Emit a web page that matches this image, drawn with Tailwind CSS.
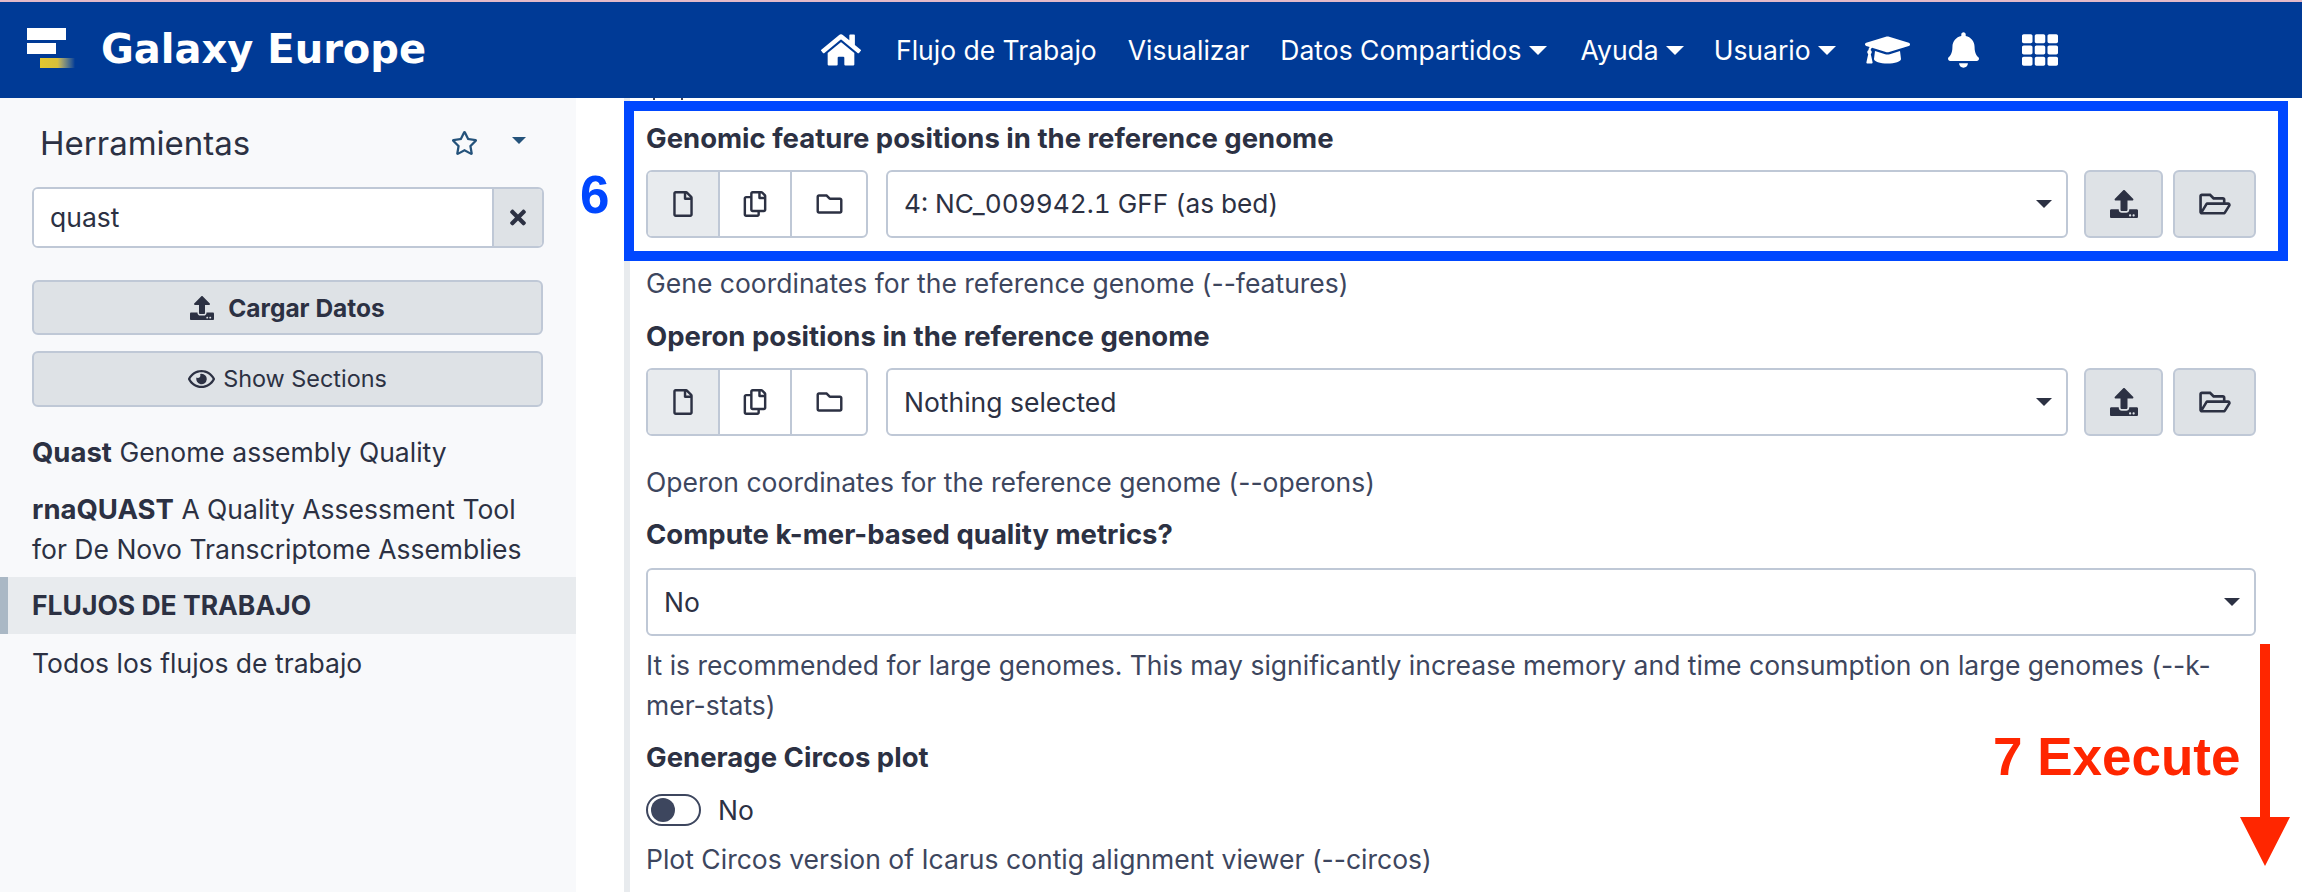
<!DOCTYPE html>
<html lang="en">
  <head>
    <meta charset="UTF-8" />
    <title>Galaxy Europe</title>
    <script src="https://cdn.jsdelivr.net/npm/@tailwindcss/browser@4"></script>
  </head>
  <body class="w-[2302px] h-[892px] overflow-hidden bg-white font-['Inter',sans-serif] text-[26.5px] leading-[40px] text-[#2c3143]">
    <!-- masthead -->
    <header class="flex items-center h-[98px] border-t-2 border-[#e3b9c9] bg-[#003a96] text-white">
      <div class="w-[27px]"></div>
      <div class="flex flex-col w-[48px] h-[42px] gap-[3px] mt-[-2px]">
        <div class="w-[39px] h-[12px] bg-white"></div>
        <div class="w-[29px] h-[11px] bg-white"></div>
        <div class="w-[35px] h-[10px] ml-[13px] mt-[1px] bg-gradient-to-r from-[#e3c72e] via-[#d8bf3a] to-[#003a96]"></div>
      </div>
      <div class="ml-[26px] w-[720px] font-['DejaVu_Sans',sans-serif] font-bold text-[40px] leading-none mt-[-2px]">Galaxy Europe</div>
      <nav class="flex items-center">
        <svg class="w-[40px] h-[36px] fill-white" viewBox="0 0 576 512"><path d="M280.37 148.26L96 300.11V464a16 16 0 0 0 16 16l112.06-.29a16 16 0 0 0 15.92-16V368a16 16 0 0 1 16-16h64a16 16 0 0 1 16 16v95.64a16 16 0 0 0 16 16.05L464 480a16 16 0 0 0 16-16V300L295.67 148.26a12.19 12.19 0 0 0-15.3 0zM571.6 251.47L488 182.56V44.05a12 12 0 0 0-12-12h-56a12 12 0 0 0-12 12v72.61L318.47 43a48 48 0 0 0-61 0L4.34 251.47a12 12 0 0 0-1.6 16.9l25.5 31A12 12 0 0 0 45.15 301l235.22-193.74a12.19 12.19 0 0 1 15.3 0L530.9 301a12 12 0 0 0 16.9-1.6l25.5-31a12 12 0 0 0-1.7-16.93z"/></svg>
        <a class="ml-[35px]">Flujo de Trabajo</a>
        <a class="ml-[31px]">Visualizar</a>
        <a class="ml-[31px] flex items-center">Datos Compartidos<span class="ml-[7px] border-x-[9px] border-t-[9px] border-x-transparent border-t-white"></span></a>
        <a class="ml-[34px] flex items-center">Ayuda<span class="ml-[7px] border-x-[9px] border-t-[9px] border-x-transparent border-t-white"></span></a>
        <a class="ml-[30px] flex items-center">Usuario<span class="ml-[7px] border-x-[9px] border-t-[9px] border-x-transparent border-t-white"></span></a>
        <svg class="ml-[29px] w-[45px] h-[36px] fill-white" viewBox="0 0 640 512"><path d="M622.34 153.2L343.4 67.5c-15.2-4.67-31.6-4.67-46.79 0L17.66 153.2c-23.54 7.23-23.54 38.36 0 45.59l48.63 14.94c-10.67 13.19-17.23 29.28-17.88 46.9C38.78 266.15 32 276.11 32 288c0 10.78 5.68 19.85 13.86 25.65L20.33 428.53C18.11 438.52 25.71 448 35.94 448h56.11c10.24 0 17.84-9.48 15.62-19.47L82.14 313.65C90.32 307.85 96 298.78 96 288c0-11.57-6.47-21.25-15.66-26.87.76-15.02 8.44-28.3 20.69-36.72L296.6 284.5c9.06 2.78 26.44 6.25 46.79 0l278.95-85.7c23.55-7.24 23.55-38.36 0-45.6zM352.79 315.09c-28.53 8.76-52.84 3.92-65.59 0l-145.02-44.55L128 384c0 35.35 85.96 64 192 64s192-28.65 192-64l-14.18-113.47-145.03 44.56z"/></svg>
        <svg class="ml-[38px] w-[31px] h-[36px] fill-white" viewBox="0 0 448 512"><path d="M224 512c35.32 0 63.97-28.65 63.97-64H160.03c0 35.35 28.65 64 63.97 64zm215.39-149.71c-19.32-20.76-55.47-51.99-55.47-154.29 0-77.7-54.48-139.9-127.94-155.16V32c0-17.67-14.32-32-31.98-32s-31.98 14.33-31.98 32v20.84C118.56 68.1 64.08 130.3 64.08 208c0 102.3-36.15 133.53-55.47 154.29-6 6.45-8.66 14.16-8.61 21.71.11 16.4 12.98 32 32.1 32h383.8c19.12 0 32-15.6 32.1-32 .05-7.55-2.61-15.27-8.61-21.71z"/></svg>
        <svg class="ml-[43px] w-[36px] h-[36px] fill-white" viewBox="0 0 512 512"><path d="M149.333 56v80c0 13.255-10.745 24-24 24H24c-13.255 0-24-10.745-24-24V56c0-13.255 10.745-24 24-24h101.333c13.255 0 24 10.745 24 24zm181.334 240v-80c0-13.255-10.745-24-24-24H205.333c-13.255 0-24 10.745-24 24v80c0 13.255 10.745 24 24 24h101.333c13.256 0 24.001-10.745 24.001-24zm32-240v80c0 13.255 10.745 24 24 24H488c13.255 0 24-10.745 24-24V56c0-13.255-10.745-24-24-24H386.667c-13.255 0-24 10.745-24 24zm-32 80V56c0-13.255-10.745-24-24-24H205.333c-13.255 0-24 10.745-24 24v80c0 13.255 10.745 24 24 24h101.333c13.256 0 24.001-10.745 24.001-24zm-205.334 56H24c-13.255 0-24 10.745-24 24v80c0 13.255 10.745 24 24 24h101.333c13.255 0 24-10.745 24-24v-80c0-13.255-10.745-24-24-24zM0 376v80c0 13.255 10.745 24 24 24h101.333c13.255 0 24-10.745 24-24v-80c0-13.255-10.745-24-24-24H24c-13.255 0-24 10.745-24 24zm386.667-56H488c13.255 0 24-10.745 24-24v-80c0-13.255-10.745-24-24-24H386.667c-13.255 0-24 10.745-24 24v80c0 13.255 10.745 24 24 24zm0 160H488c13.255 0 24-10.745 24-24v-80c0-13.255-10.745-24-24-24H386.667c-13.255 0-24 10.745-24 24v80c0 13.255 10.745 24 24 24zM181.333 376v80c0 13.255 10.745 24 24 24h101.333c13.255 0 24-10.745 24-24v-80c0-13.255-10.745-24-24-24H205.333c-13.255 0-24 10.745-24 24z"/></svg>
      </nav>
    </header>

    <div class="flex h-[794px]">
      <!-- tool panel -->
      <aside class="w-[576px] shrink-0 bg-[#f8f9fb]">
        <div class="flex items-center h-[89px] pl-[40px] pr-[50px]">
          <h2 class="flex-1 text-[33px]">Herramientas</h2>
          <svg class="w-[27px] h-[24px] fill-[#25537b]" viewBox="0 0 576 512"><path d="M528.1 171.5L382 150.2 316.7 17.8c-11.7-23.6-45.6-23.9-57.4 0L194 150.2 47.9 171.5c-26.2 3.8-36.7 36.1-17.7 54.6l105.7 103-25 145.5c-4.5 26.3 23.2 46 46.4 33.7L288 439.6l130.7 68.7c23.2 12.2 50.9-7.4 46.4-33.7l-25-145.5 105.7-103c19-18.5 8.5-50.8-17.7-54.6zM388.6 312.3l23.7 138.4L288 385.4l-124.3 65.3 23.7-138.4-100.6-98 139-20.2 62.2-126 62.2 126 139 20.2-100.6 98z"/></svg>
          <span class="ml-[34px] mt-[-4px] border-x-[7px] border-t-[7px] border-x-transparent border-t-[#25537b]"></span>
        </div>
        <div class="mx-[32px] flex h-[61px] rounded-[6px] border-2 border-[#bfc8d6] overflow-hidden">
          <div class="flex-1 bg-white pl-[16px] text-[26.5px] leading-[57px]">quast</div>
          <div class="flex items-center justify-center w-[50px] border-l-2 border-[#bfc8d6] bg-[#dee2e6]">
            <svg class="w-[16px] h-[23px] fill-[#2c3143]" viewBox="0 0 352 512"><path d="M242.72 256l100.07-100.07c12.28-12.28 12.28-32.19 0-44.48l-22.24-22.24c-12.28-12.28-32.19-12.28-44.48 0L176 189.28 75.93 89.21c-12.28-12.28-32.19-12.28-44.48 0L9.21 111.45c-12.28 12.28-12.28 32.19 0 44.48L109.28 256 9.21 356.07c-12.28 12.28-12.28 32.19 0 44.48l22.24 22.24c12.28 12.28 32.2 12.28 44.48 0L176 322.72l100.07 100.07c12.28 12.28 32.2 12.28 44.48 0l22.24-22.24c12.28-12.28 12.28-32.19 0-44.48L242.72 256z"/></svg>
          </div>
        </div>
        <button class="mx-[32px] mt-[32px] flex items-center justify-center w-[511px] h-[55px] rounded-[6px] border-2 border-[#bfc8d6] bg-[#dee2e6] text-[24.5px] font-bold">
          <svg class="w-[24px] h-[24px] mr-[14px] fill-[#2c3143]" viewBox="0 0 512 512"><path d="M296 384h-80c-13.3 0-24-10.7-24-24V192h-87.7c-17.8 0-26.7-21.5-14.1-34.1L242.3 5.7c7.5-7.5 19.8-7.5 27.3 0l152.2 152.2c12.6 12.6 3.7 34.1-14.1 34.1H320v168c0 13.3-10.7 24-24 24zm216-8v112c0 13.3-10.7 24-24 24H24c-13.3 0-24-10.7-24-24V376c0-13.3 10.7-24 24-24h136v8c0 30.9 25.1 56 56 56h80c30.9 0 56-25.1 56-56v-8h136c13.3 0 24 10.7 24 24zm-124 88c0-11-9-20-20-20s-20 9-20 20 9 20 20 20 20-9 20-20zm64 0c0-11-9-20-20-20s-20 9-20 20 9 20 20 20 20-9 20-20z"/></svg>
          Cargar Datos
        </button>
        <button class="mx-[32px] mt-[16px] flex items-center justify-center w-[511px] h-[56px] rounded-[6px] border-2 border-[#bfc8d6] bg-[#dee2e6] text-[23.4px]">
          <svg class="w-[27px] h-[24px] mr-[8px] fill-[#2c3143]" viewBox="0 0 576 512"><path d="M288 144a110.94 110.94 0 0 0-31.24 5 55.4 55.4 0 0 1 7.24 27 56 56 0 0 1-56 56 55.4 55.4 0 0 1-27-7.24A111.71 111.71 0 1 0 288 144zm284.52 97.4C518.29 135.59 410.93 64 288 64S57.68 135.64 3.48 241.41a32.35 32.35 0 0 0 0 29.19C57.71 376.41 165.07 448 288 448s230.32-71.64 284.52-177.41a32.35 32.35 0 0 0 0-29.19zM288 400c-98.65 0-189.09-55-237.93-144C98.91 167 189.34 112 288 112s189.09 55 237.93 144C477.1 345 386.66 400 288 400z"/></svg>
          Show Sections
        </button>
        <div class="mt-[25px] px-[32px]"><b class="font-bold text-[27.5px]">Quast</b> Genome assembly Quality</div>
        <div class="mt-[17px] px-[32px]"><b class="font-bold text-[27.5px]">rnaQUAST</b> A Quality Assessment Tool<br />for De Novo Transcriptome Assemblies</div>
        <div class="mt-[8px] h-[57px] border-l-8 border-[#aab8c5] bg-[#e8ebee] pl-[24px] leading-[57px] font-bold">FLUJOS DE TRABAJO</div>
        <div class="mt-[9px] px-[32px]">Todos los flujos de trabajo</div>
      </aside>

      <!-- tool form -->
      <main class="relative flex-1 overflow-hidden">
        <div class="ml-[48px] mr-[46px] h-full border-l-6 border-[#e8ebee] pl-[16px] text-[#3d465e]">
          <!-- bottom of the scrolled-away help line -->
          <div class="flex h-[3px]">
            <div class="ml-[7px] w-[2px] h-[2px] bg-[#3d465e]"></div>
            <div class="ml-[26px] w-[2px] h-[2px] bg-[#3d465e]"></div>
          </div>
          <h3 class="mt-[17px] text-[27.5px] font-bold text-[#2c3143]">Genomic feature positions in the reference genome</h3>
          <div class="mt-[12px] flex gap-[18px] h-[68px]">
            <div class="flex w-[222px] rounded-[6px] border-2 border-[#bfc8d6] bg-white overflow-hidden">
              <div class="flex items-center justify-center w-[70px] bg-[#e8ebee]"><svg class="w-[20px] h-[26px] fill-[#2c3143]" viewBox="0 0 384 512"><path d="M369.9 97.9L286 14C277 5 264.8-.1 252.1-.1H48C21.5 0 0 21.5 0 48v416c0 26.5 21.5 48 48 48h288c26.5 0 48-21.5 48-48V131.9c0-12.7-5.1-25-14.1-34zM332.1 128H256V51.9l76.1 76.1zM48 464V48h160v104c0 13.3 10.7 24 24 24h104v288H48z"/></svg></div>
              <div class="flex items-center justify-center w-[74px] border-x-2 border-[#bfc8d6]"><svg class="w-[24px] h-[26px] fill-[#2c3143]" viewBox="0 0 448 512"><path d="M433.941 65.941l-51.882-51.882A48 48 0 0 0 348.118 0H176c-26.51 0-48 21.49-48 48v48H48c-26.51 0-48 21.49-48 48v320c0 26.51 21.49 48 48 48h224c26.51 0 48-21.49 48-48v-48h80c26.51 0 48-21.49 48-48V99.882a48 48 0 0 0-14.059-33.941zM266 464H54a6 6 0 0 1-6-6V150a6 6 0 0 1 6-6h74v224c0 26.51 21.49 48 48 48h96v42a6 6 0 0 1-6 6zm128-96H182a6 6 0 0 1-6-6V54a6 6 0 0 1 6-6h106v88c0 13.255 10.745 24 24 24h88v202a6 6 0 0 1-6 6zm6-256h-64V48h9.632c1.591 0 3.117.632 4.243 1.757l48.368 48.368a6 6 0 0 1 1.757 4.243V112z"/></svg></div>
              <div class="flex items-center justify-center flex-1"><svg class="w-[27px] h-[26px] fill-[#2c3143]" viewBox="0 0 512 512"><path d="M464 128H272l-54.63-54.63c-6-6-14.14-9.37-22.63-9.37H48C21.49 64 0 85.49 0 112v288c0 26.51 21.49 48 48 48h416c26.51 0 48-21.49 48-48V176c0-26.51-21.49-48-48-48zm0 272H48V112h140.12l54.63 54.63c6 6 14.14 9.37 22.63 9.37H464v224z"/></svg></div>
            </div>
            <div class="flex items-center w-[1182px] rounded-[6px] border-2 border-[#bfc8d6] bg-white pl-[16px] pr-[14px] text-[#2c3143]"><span class="flex-1 tabular-nums text-[26.2px]">4: NC_009942.1 GFF (as bed)</span><span class="border-x-[8px] border-t-[8px] border-x-transparent border-t-[#2c3143]"></span></div>
            <div class="flex items-center justify-center w-[79px] ml-[-2px] rounded-[6px] border-2 border-[#bfc8d6] bg-[#dee2e6]"><svg class="w-[28px] h-[28px] fill-[#2c3143]" viewBox="0 0 512 512"><path d="M296 384h-80c-13.3 0-24-10.7-24-24V192h-87.7c-17.8 0-26.7-21.5-14.1-34.1L242.3 5.7c7.5-7.5 19.8-7.5 27.3 0l152.2 152.2c12.6 12.6 3.7 34.1-14.1 34.1H320v168c0 13.3-10.7 24-24 24zm216-8v112c0 13.3-10.7 24-24 24H24c-13.3 0-24-10.7-24-24V376c0-13.3 10.7-24 24-24h136v8c0 30.9 25.1 56 56 56h80c30.9 0 56-25.1 56-56v-8h136c13.3 0 24 10.7 24 24zm-124 88c0-11-9-20-20-20s-20 9-20 20 9 20 20 20 20-9 20-20zm64 0c0-11-9-20-20-20s-20 9-20 20 9 20 20 20 20-9 20-20z"/></svg></div>
            <div class="flex items-center justify-center w-[83px] ml-[-8px] rounded-[6px] border-2 border-[#bfc8d6] bg-[#dee2e6]"><svg class="w-[32px] h-[28px] fill-[#2c3143]" viewBox="0 0 576 512"><path d="M527.9 224H480v-48c0-26.5-21.5-48-48-48H272l-64-64H48C21.5 64 0 85.5 0 112v288c0 26.5 21.5 48 48 48h400c16.5 0 31.9-8.5 40.7-22.6l79.9-128c20-31.9-3-73.4-40.7-73.4zM48 118c0-3.3 2.7-6 6-6h134.1l64 64H426c3.3 0 6 2.7 6 6v42H152c-16.8 0-32.4 8.8-41.1 23.2L48 351.4zm400 282H72l77.2-128H528z"/></svg></div>
          </div>
          <p class="mt-[25px]">Gene coordinates for the reference genome (--features)</p>
          <h3 class="mt-[13px] text-[27.5px] font-bold text-[#2c3143]">Operon positions in the reference genome</h3>
          <div class="mt-[12px] flex gap-[18px] h-[68px]">
            <div class="flex w-[222px] rounded-[6px] border-2 border-[#bfc8d6] bg-white overflow-hidden">
              <div class="flex items-center justify-center w-[70px] bg-[#e8ebee]"><svg class="w-[20px] h-[26px] fill-[#2c3143]" viewBox="0 0 384 512"><path d="M369.9 97.9L286 14C277 5 264.8-.1 252.1-.1H48C21.5 0 0 21.5 0 48v416c0 26.5 21.5 48 48 48h288c26.5 0 48-21.5 48-48V131.9c0-12.7-5.1-25-14.1-34zM332.1 128H256V51.9l76.1 76.1zM48 464V48h160v104c0 13.3 10.7 24 24 24h104v288H48z"/></svg></div>
              <div class="flex items-center justify-center w-[74px] border-x-2 border-[#bfc8d6]"><svg class="w-[24px] h-[26px] fill-[#2c3143]" viewBox="0 0 448 512"><path d="M433.941 65.941l-51.882-51.882A48 48 0 0 0 348.118 0H176c-26.51 0-48 21.49-48 48v48H48c-26.51 0-48 21.49-48 48v320c0 26.51 21.49 48 48 48h224c26.51 0 48-21.49 48-48v-48h80c26.51 0 48-21.49 48-48V99.882a48 48 0 0 0-14.059-33.941zM266 464H54a6 6 0 0 1-6-6V150a6 6 0 0 1 6-6h74v224c0 26.51 21.49 48 48 48h96v42a6 6 0 0 1-6 6zm128-96H182a6 6 0 0 1-6-6V54a6 6 0 0 1 6-6h106v88c0 13.255 10.745 24 24 24h88v202a6 6 0 0 1-6 6zm6-256h-64V48h9.632c1.591 0 3.117.632 4.243 1.757l48.368 48.368a6 6 0 0 1 1.757 4.243V112z"/></svg></div>
              <div class="flex items-center justify-center flex-1"><svg class="w-[27px] h-[26px] fill-[#2c3143]" viewBox="0 0 512 512"><path d="M464 128H272l-54.63-54.63c-6-6-14.14-9.37-22.63-9.37H48C21.49 64 0 85.49 0 112v288c0 26.51 21.49 48 48 48h416c26.51 0 48-21.49 48-48V176c0-26.51-21.49-48-48-48zm0 272H48V112h140.12l54.63 54.63c6 6 14.14 9.37 22.63 9.37H464v224z"/></svg></div>
            </div>
            <div class="flex items-center w-[1182px] rounded-[6px] border-2 border-[#bfc8d6] bg-white pl-[16px] pr-[14px] text-[#2c3143]"><span class="flex-1">Nothing selected</span><span class="border-x-[8px] border-t-[8px] border-x-transparent border-t-[#2c3143]"></span></div>
            <div class="flex items-center justify-center w-[79px] ml-[-2px] rounded-[6px] border-2 border-[#bfc8d6] bg-[#dee2e6]"><svg class="w-[28px] h-[28px] fill-[#2c3143]" viewBox="0 0 512 512"><path d="M296 384h-80c-13.3 0-24-10.7-24-24V192h-87.7c-17.8 0-26.7-21.5-14.1-34.1L242.3 5.7c7.5-7.5 19.8-7.5 27.3 0l152.2 152.2c12.6 12.6 3.7 34.1-14.1 34.1H320v168c0 13.3-10.7 24-24 24zm216-8v112c0 13.3-10.7 24-24 24H24c-13.3 0-24-10.7-24-24V376c0-13.3 10.7-24 24-24h136v8c0 30.9 25.1 56 56 56h80c30.9 0 56-25.1 56-56v-8h136c13.3 0 24 10.7 24 24zm-124 88c0-11-9-20-20-20s-20 9-20 20 9 20 20 20 20-9 20-20zm64 0c0-11-9-20-20-20s-20 9-20 20 9 20 20 20 20-9 20-20z"/></svg></div>
            <div class="flex items-center justify-center w-[83px] ml-[-8px] rounded-[6px] border-2 border-[#bfc8d6] bg-[#dee2e6]"><svg class="w-[32px] h-[28px] fill-[#2c3143]" viewBox="0 0 576 512"><path d="M527.9 224H480v-48c0-26.5-21.5-48-48-48H272l-64-64H48C21.5 64 0 85.5 0 112v288c0 26.5 21.5 48 48 48h400c16.5 0 31.9-8.5 40.7-22.6l79.9-128c20-31.9-3-73.4-40.7-73.4zM48 118c0-3.3 2.7-6 6-6h134.1l64 64H426c3.3 0 6 2.7 6 6v42H152c-16.8 0-32.4 8.8-41.1 23.2L48 351.4zm400 282H72l77.2-128H528z"/></svg></div>
          </div>
          <p class="mt-[26px]">Operon coordinates for the reference genome (--operons)</p>
          <h3 class="mt-[12px] text-[27.5px] font-bold text-[#2c3143]">Compute k-mer-based quality metrics?</h3>
          <div class="mt-[14px] flex items-center h-[68px] w-[1610px] rounded-[6px] border-2 border-[#bfc8d6] bg-white pl-[16px] pr-[14px] text-[#2c3143]"><span class="flex-1">No</span><span class="border-x-[8px] border-t-[8px] border-x-transparent border-t-[#2c3143]"></span></div>
          <p class="mt-[9px] w-[1610px]">It is recommended for large genomes. This may significantly increase memory and time consumption on large genomes (--k-mer-stats)</p>
          <h3 class="mt-[12px] text-[27.5px] font-bold text-[#2c3143]">Generage Circos plot</h3>
          <div class="mt-[17px] flex items-center h-[32px]">
            <div class="flex items-center w-[55px] h-[32px] rounded-full border-2 border-[#3d465e] bg-white pl-[3px]"><div class="w-[24px] h-[24px] rounded-full bg-[#3d465e]"></div></div>
            <span class="ml-[17px] text-[#2c3143]">No</span>
          </div>
          <p class="mt-[13px]">Plot Circos version of Icarus contig alignment viewer (--circos)</p>
        </div>

        <!-- annotations drawn on top of the form -->
        <div class="absolute left-[48px] top-[3px] w-[1664px] h-[160px] border-10 border-[#0047ff]"></div>
        <div class="absolute left-[4px] top-[67px] font-['Liberation_Sans',sans-serif] font-bold text-[53px] leading-[60px] text-[#0047ff]">6</div>
        <div class="absolute left-[1417px] top-[629px] font-['Liberation_Sans',sans-serif] font-bold text-[53px] leading-[60px] text-[#ff2600]">7 Execute</div>
        <svg class="absolute left-[1664px] top-[546px] w-[50px] h-[222px] fill-[#ff2600]" viewBox="0 0 50 222"><path d="M20 0h10v173h20l-25 49L0 173h20z"/></svg>
      </main>
    </div>
  </body>
</html>
